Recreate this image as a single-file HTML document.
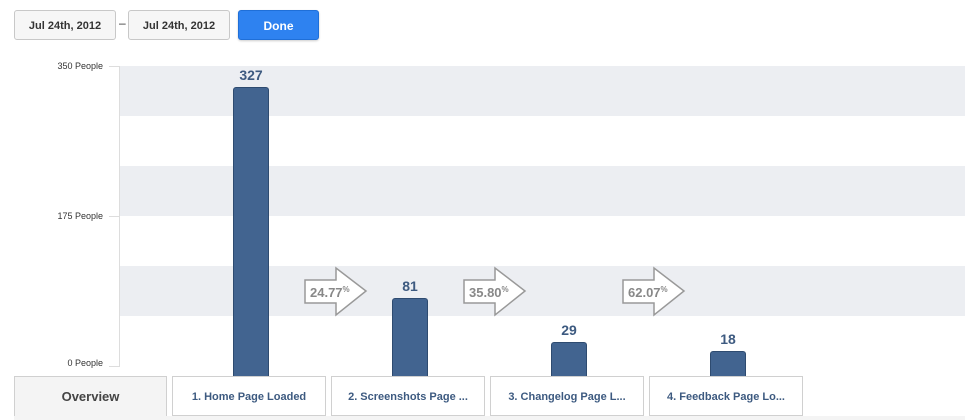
<!DOCTYPE html>
<html><head><style>
body{margin:0;width:965px;height:420px;overflow:hidden;background:#fff;font-family:"Liberation Sans",sans-serif;position:relative}
.abs{position:absolute}
.btn{position:absolute;top:10px;height:30px;border:1px solid #c8c8c8;border-radius:3px;background:#f6f6f6;font-size:11px;font-weight:bold;color:#333;text-align:center;line-height:30px;box-sizing:border-box}
.band{position:absolute;left:120px;width:845px;height:50px;background:#eceef2}
.bar{position:absolute;width:36px;background:#426490;border:1px solid #2e4b70;border-bottom:none;border-radius:3px 3px 0 0;box-sizing:border-box}
.val{position:absolute;width:60px;text-align:center;font-size:14px;font-weight:bold;color:#3d5a80}
.ax{position:absolute;font-size:9px;color:#333;text-align:right;width:100px;left:3px}
.tab{position:absolute;top:376px;height:40px;border:1px solid #d0d0d0;background:#fff;box-sizing:border-box;font-size:11px;font-weight:bold;color:#3d5a80;text-align:center;line-height:40px}
</style></head><body>
<div class="btn" style="left:14px;width:102px">Jul 24th, 2012</div>
<div class="abs" style="left:119px;top:16px;font-size:12px;color:#333">–</div>
<div class="btn" style="left:128px;width:102px">Jul 24th, 2012</div>
<div class="btn" style="left:238px;width:81px;background:#2e82f0;border-color:#1f6fd8;color:#fff;font-size:12px;box-shadow:0 1px 2px rgba(0,0,0,.2)">Done</div>

<div class="band" style="top:66px"></div>
<div class="band" style="top:166px"></div>
<div class="band" style="top:266px"></div>
<div class="abs" style="left:119px;top:66px;width:1px;height:301px;background:#ddd"></div>
<div class="abs" style="left:109px;top:66px;width:10px;height:1px;background:#ddd"></div>
<div class="abs" style="left:109px;top:216px;width:10px;height:1px;background:#ddd"></div>
<div class="abs" style="left:109px;top:366px;width:10px;height:1px;background:#ddd"></div>
<div class="ax" style="top:61px">350 People</div>
<div class="ax" style="top:211px">175 People</div>
<div class="ax" style="top:358px">0 People</div>

<div class="val" style="left:221px;top:67px">327</div>
<div class="bar" style="left:233px;top:87px;height:289px"></div>
<div class="val" style="left:380px;top:278px">81</div>
<div class="bar" style="left:392px;top:298px;height:78px"></div>
<div class="val" style="left:539px;top:322px">29</div>
<div class="bar" style="left:551px;top:342px;height:34px"></div>
<div class="val" style="left:698px;top:331px">18</div>
<div class="bar" style="left:710px;top:351px;height:25px"></div>

<svg class="abs" style="left:0;top:0" width="965" height="420">
<g fill="#fff" stroke="#999" stroke-width="1.5">
<path d="M305 280H336V268L366 291L336 315V303H305Z"/>
<path d="M464 280H495V268L525 291L495 315V303H464Z"/>
<path d="M623 280H654V268L684 291L654 315V303H623Z"/>
</g>
<g fill="#888" font-family="Liberation Sans" font-weight="bold" font-size="13">
<text x="310" y="297">24.77<tspan font-size="8" dy="-5">%</tspan></text>
<text x="469" y="297">35.80<tspan font-size="8" dy="-5">%</tspan></text>
<text x="628" y="297">62.07<tspan font-size="8" dy="-5">%</tspan></text>
</g>
</svg>

<div class="tab" style="left:14px;width:153px;height:44px;background:#f4f4f4;color:#444;font-size:13px;border-bottom:none">Overview</div>
<div class="tab" style="left:172px;width:154px">1. Home Page Loaded</div>
<div class="tab" style="left:331px;width:154px">2. Screenshots Page ...</div>
<div class="tab" style="left:490px;width:154px">3. Changelog Page L...</div>
<div class="tab" style="left:649px;width:154px">4. Feedback Page Lo...</div>
<div class="abs" style="left:14px;top:416px;width:951px;height:4px;background:#f4f4f4"></div>
</body></html>
